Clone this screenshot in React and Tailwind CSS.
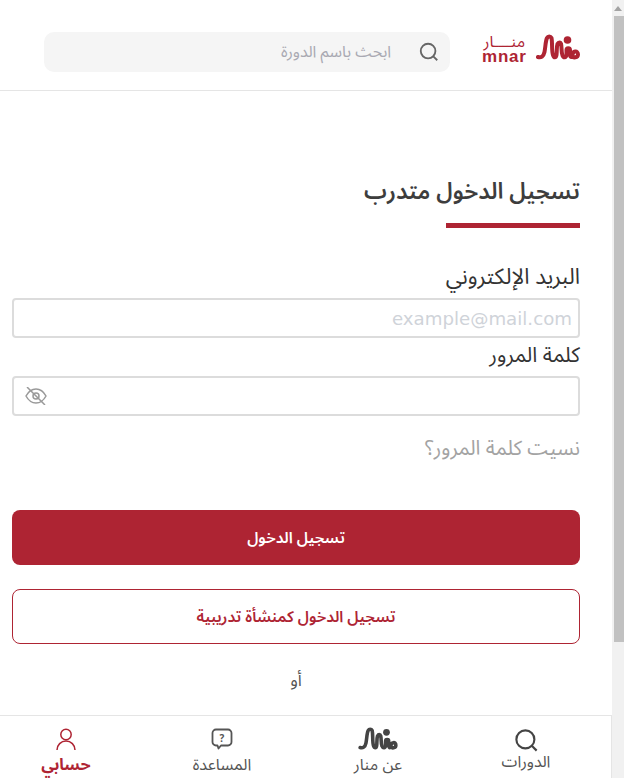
const Logo = ({ className }) => (
  <svg viewBox="0 0 44 28" className={className} fill="none" stroke="currentColor" strokeLinecap="round" strokeLinejoin="round">
    <path d="M2 23C5 24 7.500 22.500 8.500 18C9.500 13 9.500 7 11 4C12 2 14.500 2 15.500 4C16.500 8 15.500 17 17 21C18 24 20 24 20.500 21C21 17 20.500 13 21.500 10C22.500 8 24.500 8 25 10C26 13 25 18 26.500 21.500C27.500 24 30 24 30.500 21L30.500 16C30.500 13.500 34 13.500 34 16L34 21C34.500 24 36.500 23.500 36.500 21C36.500 17 42 16 42 20.500C42 24 37 24 36.500 22" strokeWidth="4" />
    <circle cx="31.500" cy="6" r="3.800" fill="currentColor" stroke="none" />
  </svg>
);

const NavLabel = ({ children, className = "" }) => (
  <span className={`whitespace-nowrap text-[16px] leading-[20px] ${className}`}>{children}</span>
);

export default function App() {
  return (
    <div className="flex h-[778px] w-[624px] overflow-hidden bg-white font-['Noto_Sans_Arabic','Noto_Sans',sans-serif]" dir="ltr">
      <div className="flex h-full w-[612px] flex-col" dir="rtl">
        <header className="flex h-[91px] shrink-0 items-start gap-[32px] border-b border-[#e5e5e5] pt-[32px] pr-[32px] pl-[44px]">
          <div className="mt-[2px] flex w-[98px] shrink-0 items-start justify-between text-[#ae2433]" dir="ltr">
            <div className="flex flex-col items-center">
              <span className="whitespace-nowrap text-[16px] leading-[16px]">منــــار</span>
              <span className="font-['Liberation_Sans',sans-serif] text-[17px] font-bold leading-[14px] tracking-[0.8px]">mnar</span>
            </div>
            <Logo className="h-[28px] w-[44px]" />
          </div>
          <div className="flex h-[40px] flex-1 items-center rounded-[10px] bg-[#f5f5f5] pr-[10px]">
            <svg viewBox="0 0 24 24" className="h-[22px] w-[22px] text-[#666]" fill="none" stroke="currentColor" strokeWidth="2"><circle cx="11" cy="11" r="8" /><path d="m21 21-4.300-4.300" /></svg>
            <span className="mr-[27px] text-[16px] text-[#a9a9b2]">ابحث باسم الدورة</span>
          </div>
        </header>

        <main className="flex flex-1 flex-col overflow-hidden pr-[32px] pl-[12px]">
          <h1 className="mt-[85px] text-[22.800px] font-semibold leading-[32px] text-[#3d3d3d]">تسجيل الدخول متدرب</h1>
          <div className="mt-[15px] h-[5px] w-[134px] bg-[#ae2433]" />
          <label className="mt-[37px] text-[22px] leading-[24px] text-[#333]">البريد الإلكتروني</label>
          <div className="mt-[9px] flex h-[40px] items-center justify-start rounded-[4px] border-2 border-[#dcdcdc] px-[6px] pt-[2px]">
            <span className="font-['DejaVu_Sans',sans-serif] text-[18.200px] text-[#cfd3d9]" dir="ltr">example@mail.com</span>
          </div>
          <label className="mt-[5px] text-[21px] leading-[24px] text-[#333]">كلمة المرور</label>
          <div className="mt-[9px] flex h-[40px] items-center justify-end rounded-[4px] border-2 border-[#dcdcdc] pl-[11px]">
            <svg viewBox="0 0 22 18" className="h-[18px] w-[22px] text-[#999]" fill="none" stroke="currentColor" strokeWidth="1.500"><path d="M1 9C4 3.500 8 2 11 2C14 2 18 3.500 21 9C18 14.500 14 16 11 16C8 16 4 14.500 1 9Z" /><circle cx="11" cy="9" r="3" /><path d="M2 0L20 18" /></svg>
          </div>
          <a className="mt-[21px] text-[20.400px] leading-[24px] text-[#a3a3a3]">نسيت كلمة المرور؟</a>
          <button className="mt-[49px] h-[55px] shrink-0 rounded-[8px] bg-[#ae2433] pt-[2px] text-[15.500px] font-semibold text-white">تسجيل الدخول</button>
          <button className="mt-[24px] h-[55px] shrink-0 rounded-[8px] border border-[#ae2433] bg-white pt-[2px] text-[15.500px] font-semibold text-[#ae2433]">تسجيل الدخول كمنشأة تدريبية</button>
          <p className="mt-[25px] text-center text-[17px] leading-[24px] text-[#555]">أو</p>
        </main>

        <nav className="flex h-[63px] shrink-0 items-start border-t border-r border-[#e5e5e5] bg-white pt-[11px] pr-[55px] text-[#555]">
          <div className="flex w-[60px] flex-col items-center">
            <svg viewBox="0 0 24 24" className="h-[27px] w-[27px] text-[#444]" fill="none" stroke="currentColor" strokeWidth="1.900"><circle cx="11" cy="11" r="8" /><path d="m21 21-4.300-4.300" /></svg>
            <NavLabel className="-mt-[2px]">الدورات</NavLabel>
          </div>
          <div className="mr-[88px] flex w-[60px] flex-col items-center">
            <Logo className="h-[25px] w-[40px] text-[#444]" />
            <NavLabel className="mt-[3px]">عن منار</NavLabel>
          </div>
          <div className="mr-[96px] flex w-[60px] flex-col items-center">
            <svg viewBox="0 0 24 24" className="h-[24px] w-[24px] text-[#555]" fill="none" stroke="currentColor" strokeWidth="1.800" strokeLinejoin="round"><path d="M6 2.500h12a3.500 3.500 0 0 1 3.500 3.500v9a3.500 3.500 0 0 1-3.500 3.500h-7l-2.500 3-1-3H6a3.500 3.500 0 0 1-3.500-3.500V6A3.500 3.500 0 0 1 6 2.500Z" /><text x="12" y="14.500" textAnchor="middle" fontSize="10" fontWeight="700" fill="currentColor" stroke="none">?</text></svg>
            <NavLabel className="mt-[4px]">المساعدة</NavLabel>
          </div>
          <div className="mr-[96px] flex w-[60px] flex-col items-center text-[#ae2433]">
            <svg viewBox="0 0 24 24" className="h-[24px] w-[24px]" fill="none" stroke="currentColor" strokeWidth="1.500"><circle cx="12" cy="7.500" r="5.200" /><path d="M3 23a9 9 0 0 1 18 0" /></svg>
            <NavLabel className="mt-[4px] font-bold">حسابي</NavLabel>
          </div>
        </nav>
      </div>

      <div className="flex h-full w-[12px] flex-col bg-[#f1f1f1]">
        <div className="flex h-[16px] items-center justify-center">
          <div className="h-0 w-0 border-x-[4px] border-b-[5px] border-x-transparent border-b-[#a3a3a3]" />
        </div>
        <div className="ml-[2px] h-[626px] bg-[#c1c1c1]" />
      </div>
    </div>
  );
}
